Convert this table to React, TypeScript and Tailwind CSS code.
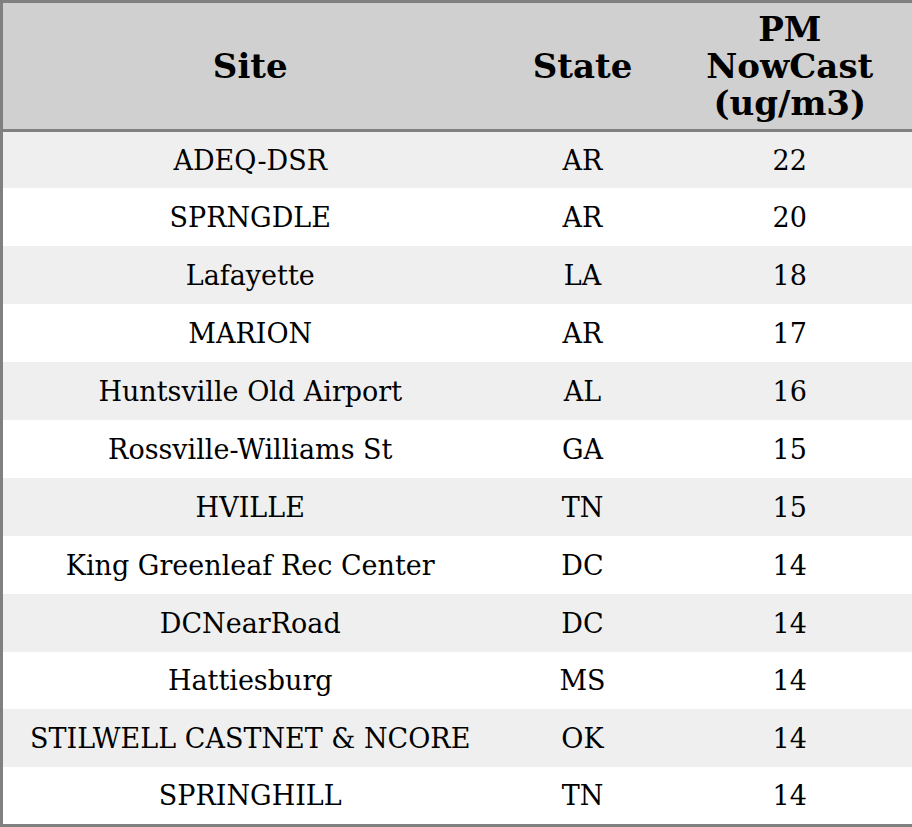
const rows: [string, string, number][] = [
  ['ADEQ-DSR', 'AR', 22],
  ['SPRNGDLE', 'AR', 20],
  ['Lafayette', 'LA', 18],
  ['MARION', 'AR', 17],
  ['Huntsville Old Airport', 'AL', 16],
  ['Rossville-Williams St', 'GA', 15],
  ['HVILLE', 'TN', 15],
  ['King Greenleaf Rec Center', 'DC', 14],
  ['DCNearRoad', 'DC', 14],
  ['Hattiesburg', 'MS', 14],
  ['STILWELL CASTNET & NCORE', 'OK', 14],
  ['SPRINGHILL', 'TN', 14],
];

export default function App() {
  return (
    <div className="w-[912px] h-[827px] bg-white font-['DejaVu_Serif',serif] text-black">
      <table className="w-[912px] table-fixed border-collapse border-[3px] border-[#808080]">
        <colgroup>
          <col className="w-[496px]" />
          <col className="w-[170px]" />
          <col className="w-[246px]" />
        </colgroup>
        <thead>
          <tr className="h-[129px] bg-[#d0d0d0] border-b-[3px] border-[#808080]">
            <th className="text-[34px] font-bold leading-[37px] text-center p-0">Site</th>
            <th className="text-[34px] font-bold leading-[37px] text-center p-0">State</th>
            <th className="text-[34px] font-bold leading-[37px] text-center p-0">
              PM
              <br />
              NowCast
              <br />
              (ug/m3)
            </th>
          </tr>
        </thead>
        <tbody>
          {rows.map(([site, state, value], i) => (
            <tr key={i} className={i % 2 === 0 ? 'h-[57.9px] bg-[#efefef]' : 'h-[57.9px] bg-white'}>
              <td className="text-[27px] leading-[32px] text-center p-0 pt-[2px]">{site}</td>
              <td className="text-[27px] leading-[32px] text-center p-0 pt-[2px]">{state}</td>
              <td className="text-[27px] leading-[32px] text-center p-0 pt-[2px]">{value}</td>
            </tr>
          ))}
        </tbody>
      </table>
    </div>
  );
}
